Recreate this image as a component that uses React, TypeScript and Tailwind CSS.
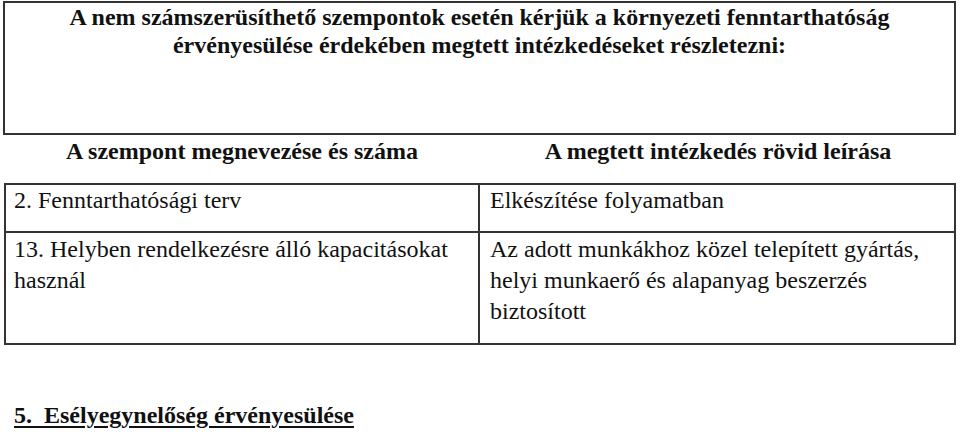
import React from "react";

export default function App() {
  return (
    <div className="w-[960px] h-[432px] overflow-hidden bg-white text-[#111] [font-family:Liberation_Serif,'Times_New_Roman',serif]">
      <div className="ml-[3px] mt-px w-[953px] h-[134px] border-2 border-[#333] text-center font-bold text-[24px] leading-[28px]">
        <p>A nem számszerüsíthető szempontok esetén kérjük a környezeti fenntarthatóság</p>
        <p>érvényesülése érdekében megtett intézkedéseket részletezni:</p>
      </div>

      <div className="ml-[4px] grid h-[48px] w-[952px] grid-cols-[476px_476px] pt-[2px] text-center font-bold text-[24px] leading-[28px]">
        <div>A szempont megnevezése és száma</div>
        <div>A megtett intézkedés rövid leírása</div>
      </div>

      <div className="ml-[4px] w-[952px] border-2 border-[#333] grid grid-cols-[474px_474px] grid-rows-[48px_110px] text-[24px] leading-[31px]">
        <div className="border-r-2 border-b-2 border-[#333] pl-[8px]">2. Fenntarthatósági terv</div>
        <div className="border-b-2 border-[#333] pl-[10px]">Elkészítése folyamatban</div>
        <div className="border-r-2 border-[#333] pl-[8px] pt-[1px]">
          13. Helyben rendelkezésre álló kapacitásokat
          <br />
          használ
        </div>
        <div className="pl-[10px] pt-[1px]">
          Az adott munkákhoz közel telepített gyártás,
          <br />
          helyi munkaerő és alapanyag beszerzés
          <br />
          biztosított
        </div>
      </div>

      <div className="mt-[56px] pl-[14px] font-bold text-[24px] leading-[28px]">
        <span className="underline decoration-2 underline-offset-[3px] whitespace-pre">5.  Esélyegynelőség érvényesülése</span>
      </div>
    </div>
  );
}
